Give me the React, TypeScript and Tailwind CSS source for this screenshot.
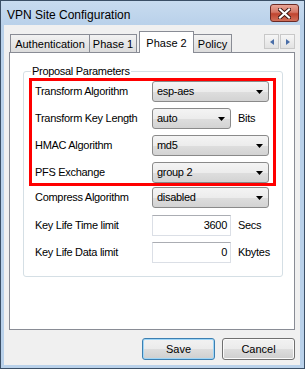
import React from "react";

const Arrow = () => (
  <svg width="7" height="4" viewBox="0 0 7 4" className="shrink-0">
    <polygon points="0,0 7,0 3.5,4" fill="#000" />
  </svg>
);

function Combo({ value, w }: { value: string; w: string }) {
  return (
    <div
      className={`${w} h-[21px] flex items-center justify-between pl-[4px] pr-[5px] rounded-[3px] border border-[#8a8a8a] bg-[linear-gradient(#f4f4f4_0%,#ececec_50%,#dedede_51%,#d3d3d3_100%)]`}
    >
      <span>{value}</span>
      <Arrow />
    </div>
  );
}

function TextBox({ value }: { value: string }) {
  return (
    <div className="w-[79px] h-[21px] flex items-center justify-end pr-[3px] bg-white border border-[#dbdfe6] border-t-[#abadb3]">
      {value}
    </div>
  );
}

function Row({ label, children }: { label: string; children: React.ReactNode }) {
  return (
    <div className="flex items-center h-[21px]">
      <div className="w-[117px] shrink-0">{label}</div>
      {children}
    </div>
  );
}

export default function App() {
  return (
    <div className="w-[305px] h-[369px] border border-[#3b4f66] bg-[#b9d1ea] flex flex-col font-['Liberation_Sans',Arial,sans-serif] text-black select-none">
      {/* Title bar */}
      <div className="h-[24px] flex items-start pl-[6px] pr-[5px] bg-[linear-gradient(#c8dbef,#b9d1ea)]">
        <span className="text-[12px] leading-[14px] mt-[7px]">VPN Site Configuration</span>
        <div className="ml-auto mt-[3px] w-[29px] h-[18px] rounded-[3px] border border-[#6b2a24] bg-[linear-gradient(#e8a597_0%,#d57766_45%,#c0442f_55%,#d2705a_100%)] flex items-center justify-center">
          <svg width="13" height="11" viewBox="0 0 13 11">
            <path d="M2 1.5 L11 9.5 M11 1.5 L2 9.5" stroke="#3a1510" strokeWidth="4" strokeLinecap="square" />
            <path d="M2 1.5 L11 9.5 M11 1.5 L2 9.5" stroke="#fff" strokeWidth="2.2" strokeLinecap="square" />
          </svg>
        </div>
      </div>

      {/* Client */}
      <div className="flex-1 ml-[3px] mr-[4px] mb-[3px] bg-[#f0f0f0] flex flex-col pt-[6px] pb-[5px] text-[11px] tracking-[-0.3px]">
        {/* Tab strip */}
        <div className="h-[21px] flex items-end pl-[6px] pr-[5px] relative z-10 tracking-normal">
          <div className="w-[80px] h-[18px] border border-b-0 border-[#898c95] bg-[linear-gradient(#f2f2f2,#dcdcdc)] flex items-center justify-center pt-[1px]">
            Authentication
          </div>
          <div className="w-[47px] h-[18px] border border-b-0 border-l-0 border-[#898c95] bg-[linear-gradient(#f2f2f2,#dcdcdc)] flex items-center justify-center pt-[1px]">
            Phase 1
          </div>
          <div className="ml-[2px] w-[55px] h-[22px] -mb-px border border-b-0 border-[#898c95] bg-white flex items-start justify-center pt-[3px]">
            Phase 2
          </div>
          <div className="w-[38px] h-[18px] border border-b-0 border-l-0 border-[#898c95] bg-[linear-gradient(#f2f2f2,#dcdcdc)] flex items-center justify-center pt-[1px]">
            Policy
          </div>
          <div className="ml-auto self-start mt-[3px] flex gap-[1px]">
            <div className="w-[15px] h-[15px] border border-[#c8c8c8] bg-[linear-gradient(#f6f6f6,#e2e2e2)] flex items-center justify-center">
              <svg width="4" height="6" viewBox="0 0 4 6"><polygon points="4,0 4,6 0,3" fill="#4a6ea8" /></svg>
            </div>
            <div className="w-[15px] h-[15px] border border-[#c8c8c8] bg-[linear-gradient(#f6f6f6,#e2e2e2)] flex items-center justify-center">
              <svg width="4" height="6" viewBox="0 0 4 6"><polygon points="0,0 0,6 4,3" fill="#4a6ea8" /></svg>
            </div>
          </div>
        </div>

        {/* Tab panel */}
        <div className="h-[278px] mx-[5px] border border-[#898c95] bg-white pt-[18px] pl-[13px] pr-[11px]">
          <div className="relative border border-[#d5dfe5] rounded-[3px] pt-[6px] pb-[13px]">
            <span className="absolute -top-[8px] left-[7px] bg-white px-[1px] leading-[14px]">Proposal Parameters</span>
            <div className="ml-[5px] mr-[6px] border-[3px] border-[#ff0000] pl-[3px] flex flex-col gap-[6px]">
              <Row label="Transform Algorithm"><Combo value="esp-aes" w="w-[117px]" /></Row>
              <Row label="Transform Key Length">
                <Combo value="auto" w="w-[79px]" />
                <span className="ml-[7px]">Bits</span>
              </Row>
              <Row label="HMAC Algorithm"><Combo value="md5" w="w-[117px]" /></Row>
              <Row label="PFS Exchange"><Combo value="group 2" w="w-[117px]" /></Row>
            </div>
            <div className="pl-[11px] mt-[1px] flex flex-col">
              <Row label="Compress Algorithm"><Combo value="disabled" w="w-[117px]" /></Row>
              <div className="mt-[7px]">
                <Row label="Key Life Time limit">
                  <TextBox value="3600" />
                  <span className="ml-[7px]">Secs</span>
                </Row>
              </div>
              <div className="mt-[6px]">
                <Row label="Key Life Data limit">
                  <TextBox value="0" />
                  <span className="ml-[7px]">Kbytes</span>
                </Row>
              </div>
            </div>
          </div>
        </div>

        {/* Buttons */}
        <div className="mt-[8px] h-[22px] flex justify-end gap-[7px] pr-[5px] tracking-normal">
          <div className="w-[73px] h-[22px] rounded-[3px] border border-[#3c7fb1] shadow-[inset_0_0_0_1px_#9fd6f7] bg-[linear-gradient(#f2f2f2_0%,#ebebeb_50%,#dddddd_51%,#cfcfcf_100%)] flex items-center justify-center">
            Save
          </div>
          <div className="w-[73px] h-[22px] rounded-[3px] border border-[#707070] shadow-[inset_0_0_0_1px_#fbfbfb] bg-[linear-gradient(#f2f2f2_0%,#ebebeb_50%,#dddddd_51%,#cfcfcf_100%)] flex items-center justify-center">
            Cancel
          </div>
        </div>
      </div>
    </div>
  );
}
